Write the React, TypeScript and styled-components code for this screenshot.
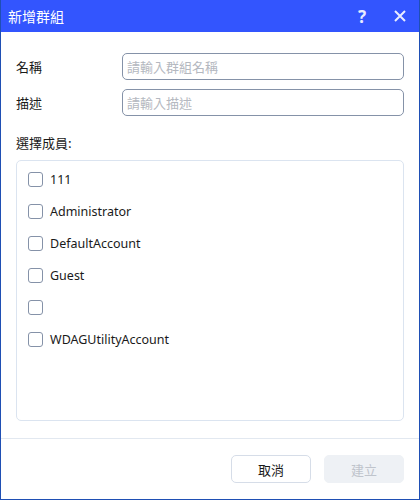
import React from "react";
import styled, { createGlobalStyle } from "styled-components";

const Global = createGlobalStyle`
  html, body { margin: 0; padding: 0; background: #ffffff; }
  body { font-family: "Noto Sans", "Noto Sans CJK TC", sans-serif; }
`;

const Window = styled.div`
  width: 420px;
  height: 500px;
  box-sizing: border-box;
  border: 1px solid #1f4fb4;
  border-top: none;
  display: flex;
  flex-direction: column;
  background: #fff;
`;

const TitleBar = styled.div`
  height: 32px;
  flex: none;
  background: #3355fe;
  display: flex;
  align-items: center;
  padding-left: 7px;
  color: #fff;
  font-family: "Noto Sans CJK TC", sans-serif;
  font-size: 14px;
`;

const Title = styled.div`
  flex: 1;
`;

const TitleButton = styled.div`
  width: 38px;
  height: 32px;
  display: flex;
  align-items: center;
  justify-content: center;
  color: #e8ecff;
  font-family: "Noto Sans", sans-serif;
  font-weight: 700;
  font-size: 17px;
`;

const Body = styled.div`
  flex: 1;
  display: flex;
  flex-direction: column;
  padding: 21px 15px 17px 15px;
`;

const FieldRow = styled.div`
  display: flex;
  align-items: center;
  height: 27px;
  margin-bottom: 9px;
`;

const Label = styled.div`
  width: 106px;
  font-family: "Noto Sans CJK TC", sans-serif;
  font-size: 13px;
  color: #1a1a1a;
`;

const Input = styled.input`
  flex: 1;
  height: 27px;
  box-sizing: border-box;
  border: 1px solid #8592a8;
  border-radius: 5px;
  padding: 0 4px;
  font-family: "Noto Sans CJK TC", sans-serif;
  font-size: 13px;
  outline: none;
  &::placeholder { color: #b4b8c0; }
`;

const SectionLabel = styled.div`
  font-family: "Noto Sans CJK TC", sans-serif;
  font-size: 13px;
  color: #1a1a1a;
  margin-top: 9px;
  margin-bottom: 8px;
  height: 18px;
  line-height: 18px;
`;

const ListBox = styled.div`
  flex: 1;
  border: 1px solid #dbe4f0;
  border-radius: 5px;
  padding: 2px 0 0 11px;
  display: flex;
  flex-direction: column;
`;

const Item = styled.label`
  display: flex;
  align-items: center;
  height: 32px;
  gap: 7px;
  font-family: "Noto Sans", "Noto Sans CJK TC", sans-serif;
  font-size: 12.5px;
  color: #1a1a1a;
`;

const Box = styled.span`
  width: 13px;
  height: 13px;
  border: 1px solid #8592a8;
  border-radius: 3px;
  background: #fff;
  flex: none;
`;

const Footer = styled.div`
  flex: none;
  height: 61px;
  border-top: 1px solid #e2e8f0;
  display: flex;
  align-items: center;
  justify-content: flex-end;
  gap: 13px;
  padding-right: 15px;
  box-sizing: border-box;
`;

const Button = styled.button<{ $disabled?: boolean }>`
  width: 80px;
  height: 28px;
  border-radius: 5px;
  border: 1px solid ${(p) => (p.$disabled ? "#eef1f5" : "#d6dde8")};
  background: ${(p) => (p.$disabled ? "#eef1f5" : "#fff")};
  color: ${(p) => (p.$disabled ? "#bfc4cc" : "#1a1a1a")};
  font-family: "Noto Sans CJK TC", sans-serif;
  font-size: 13px;
  padding: 0;
`;

const members = ["111", "Administrator", "DefaultAccount", "Guest", "", "WDAGUtilityAccount"];

export default function App() {
  return (
    <>
      <Global />
      <Window>
        <TitleBar>
          <Title>新增群組</Title>
          <TitleButton>?</TitleButton>
          <TitleButton>
            <svg width="12" height="12" viewBox="0 0 12 12" stroke="currentColor" strokeWidth="2">
              <path d="M1 1 L11 11 M11 1 L1 11" />
            </svg>
          </TitleButton>
        </TitleBar>
        <Body>
          <FieldRow>
            <Label>名稱</Label>
            <Input placeholder="請輸入群組名稱" />
          </FieldRow>
          <FieldRow>
            <Label>描述</Label>
            <Input placeholder="請輸入描述" />
          </FieldRow>
          <SectionLabel>選擇成員:</SectionLabel>
          <ListBox>
            {members.map((m, i) => (
              <Item key={i}>
                <Box />
                <span>{m}</span>
              </Item>
            ))}
          </ListBox>
        </Body>
        <Footer>
          <Button>取消</Button>
          <Button $disabled>建立</Button>
        </Footer>
      </Window>
    </>
  );
}
